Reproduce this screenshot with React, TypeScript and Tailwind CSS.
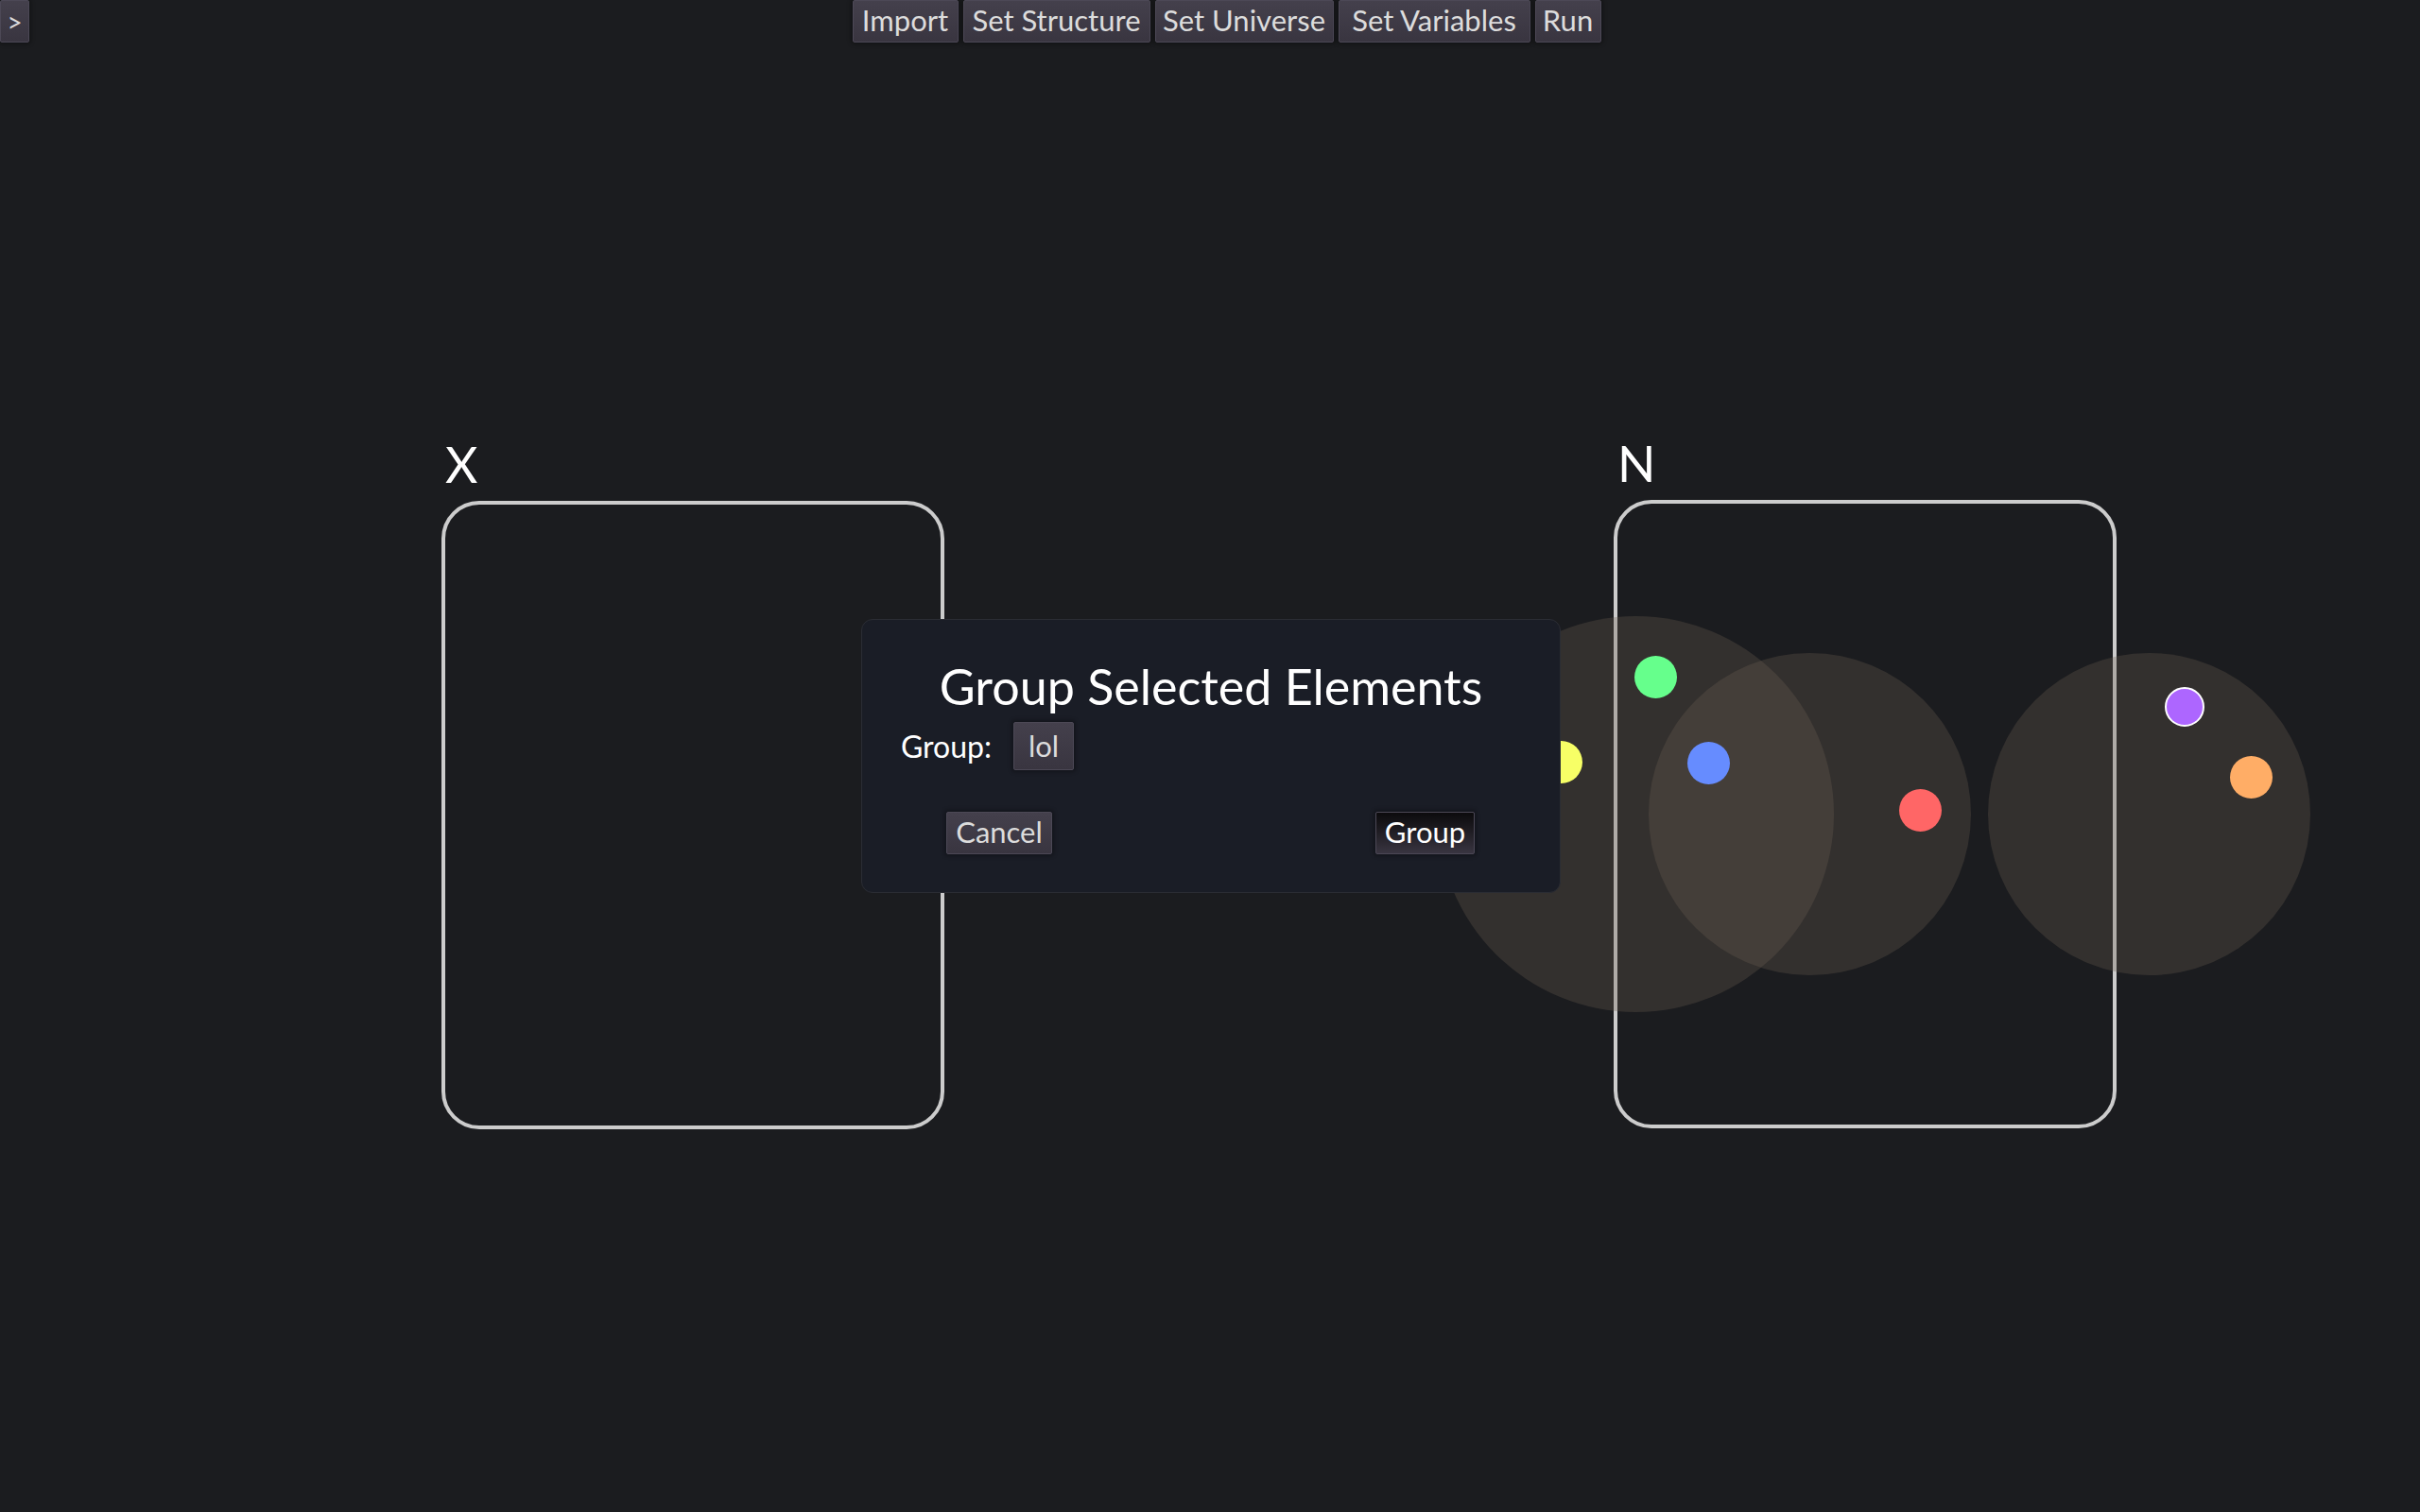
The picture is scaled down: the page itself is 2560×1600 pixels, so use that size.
import type { ReactNode } from "react";

const buttonBase =
  "flex shrink-0 items-center justify-center rounded-[2px] border border-[#4c4856] text-[31px] leading-none whitespace-nowrap shadow-[0_0_4px_2px_rgba(0,0,0,0.3)]";
const raised = "bg-linear-to-b from-[#44404c] to-[#393540] text-[#dcdcdc]";
const pressed = "bg-linear-to-b from-[#0c0b0d] to-[#393541] text-white";

function PanelButton({
  children,
  width,
  active = false,
  label,
}: {
  children: ReactNode;
  width: string;
  active?: boolean;
  label?: string;
}) {
  return (
    <button
      type="button"
      aria-label={label}
      className={`${buttonBase} h-[45px] pb-[2px] ${active ? pressed : raised} ${width}`}
    >
      {children}
    </button>
  );
}

const toolbar = [
  { label: "Import", width: "w-[112px]" },
  { label: "Set Structure", width: "w-[198px]" },
  { label: "Set Universe", width: "w-[189px]" },
  { label: "Set Variables", width: "w-[203px]" },
  { label: "Run", width: "w-[70px]" },
];

const structures = [
  { name: "X", place: "left-[467px] top-[464px]" },
  { name: "N", place: "left-[1707px] top-[463px]" },
];

const groups = [
  "left-[1521px] top-[652px] size-[419px]",
  "left-[1744px] top-[691px] size-[341px]",
  "left-[2103px] top-[691px] size-[341px]",
];

const elements = [
  "left-[1629px] top-[784px] size-[45px] bg-[#f7ff66]",
  "left-[1729px] top-[694px] size-[45px] bg-[#66ff8c]",
  "left-[1785px] top-[785px] size-[45px] bg-[#668cff]",
  "left-[2009px] top-[835px] size-[45px] bg-[#ff6666]",
  "left-[2359px] top-[800px] size-[45px] bg-[#ffad66]",
  "left-[2290px] top-[727px] size-[42px] border-2 border-white bg-[#ad66ff]",
];

export default function App() {
  return (
    <div className="relative min-h-screen overflow-hidden bg-[#1b1c1f] font-[Lato,sans-serif] text-white">
      <main className="absolute inset-0">
        {structures.map((s) => (
          <section key={s.name} className={`absolute w-[532px] ${s.place}`}>
            <h2 className="h-[66px] pl-[4px] text-[53px] leading-[53px]">{s.name}</h2>
            <div className="h-[665px] rounded-[40px] border-4 border-[#cccccc]" />
          </section>
        ))}
        {groups.map((g) => (
          <div key={g} className={`absolute rounded-full bg-[rgba(110,96,82,0.3)] ${g}`} />
        ))}
        {elements.map((e) => (
          <div key={e} className={`absolute rounded-full ${e}`} />
        ))}
      </main>

      <header className="relative flex items-start">
        <PanelButton width="w-[31px]" label="Open side panel">
          <span className="pt-[2px] text-[28px] leading-none">&gt;</span>
        </PanelButton>
        <nav className="flex flex-1 justify-center gap-[5px] pl-1">
          {toolbar.map((t) => (
            <PanelButton key={t.label} width={t.width}>
              {t.label}
            </PanelButton>
          ))}
        </nav>
      </header>

      <div className="absolute inset-0 flex items-center justify-center pl-[2px]">
        <form
          role="dialog"
          aria-labelledby="dialog-title"
          className="flex w-[740px] flex-col rounded-xl border border-[#2b2d34] bg-[#1a1d26] pt-9 pb-10"
        >
          <h1 id="dialog-title" className="pb-1 text-center text-[52px] leading-[68px]">
            Group Selected Elements
          </h1>
          <div className="flex items-center pl-[41px]">
            <label htmlFor="group" className="w-[119px] text-[32px] leading-none">
              Group:
            </label>
            <select
              id="group"
              defaultValue="lol"
              className={`${buttonBase} ${raised} h-[51px] w-[64px] appearance-none text-center`}
            >
              <option value="lol">lol</option>
            </select>
          </div>
          <div className="flex justify-between pt-11 pr-[90px] pl-[89px]">
            <PanelButton width="w-[112px]">Cancel</PanelButton>
            <PanelButton width="w-[105px]" active>
              Group
            </PanelButton>
          </div>
        </form>
      </div>
    </div>
  );
}
